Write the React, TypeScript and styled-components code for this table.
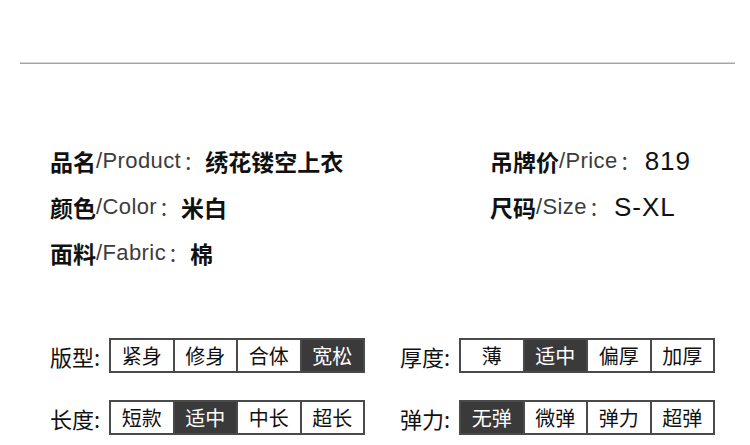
import React from "react";
import styled, { createGlobalStyle } from "styled-components";

const GlobalStyle = createGlobalStyle`
  body {
    margin: 0;
    background: #ffffff;
    font-family: "Noto Sans CJK SC", "Liberation Sans", sans-serif;
    color: #111;
  }
`;

//#region Styled components

const Page = styled("div")`
  width: 750px;
  height: 445px;
  padding-top: 62px;
  box-sizing: border-box;
  overflow: hidden;
`;

const Divider = styled("hr")`
  margin: 0 15px 0 20px;
  height: 2px;
  border: none;
  background: linear-gradient(#d4d4d4 0 50%, #a6a6a6 50% 100%);
`;

const InfoGrid = styled("div")`
  display: grid;
  grid-template-columns: 440px 1fr;
  grid-auto-rows: 46px;
  padding-left: 50px;
  margin-top: 74px;
`;

const InfoRow = styled("div")`
  display: flex;
  align-items: center;
  white-space: nowrap;
`;

const KeyCn = styled("span")`
  font-size: 23px;
  font-weight: 700;
  color: #111;
`;

const KeyEn = styled("span")`
  font-family: "Liberation Sans", sans-serif;
  font-size: 22px;
  font-weight: 400;
  color: #3c3c3c;
  letter-spacing: 0.4px;
`;

const Colon = styled("span")`
  font-size: 20px;
  color: #444;
  width: 24px;
  text-align: center;
`;

const Value = styled("span")<{ $latin?: boolean }>`
  font-family: ${(p) =>
    p.$latin ? '"Liberation Sans", sans-serif' : '"Noto Sans CJK SC", sans-serif'};
  font-size: ${(p) => (p.$latin ? "26px" : "23px")};
  font-weight: ${(p) => (p.$latin ? 400 : 700)};
  margin-left: ${(p) => (p.$latin ? "3px" : "0")};
  letter-spacing: ${(p) => (p.$latin ? "1px" : "0")};
  color: #111;
`;

const AttrGrid = styled("div")`
  display: grid;
  grid-template-columns: 350px 1fr;
  row-gap: 27px;
  padding-left: 50px;
  margin-top: 62px;
`;

const AttrRow = styled("div")`
  display: flex;
  align-items: center;
`;

const AttrLabel = styled("span")`
  width: 59px;
  font-size: 22px;
  color: #111;
  white-space: nowrap;
`;

const Options = styled("div")`
  display: flex;
  width: 256px;
  height: 35px;
  box-sizing: border-box;
  border: 2px solid #4a4a4a;
`;

const Option = styled("div")<{ $active?: boolean }>`
  flex: 1;
  display: flex;
  align-items: center;
  justify-content: center;
  font-size: 20px;
  background: ${(p) => (p.$active ? "#3a3a3a" : "#fff")};
  color: ${(p) => (p.$active ? "#fff" : "#111")};
  & + & {
    border-left: 2px solid #4a4a4a;
  }
`;
//#endregion

const info = [
  { cn: "品名", en: "/Product", value: "绣花镂空上衣" },
  { cn: "吊牌价", en: "/Price", value: "819", latin: true },
  { cn: "颜色", en: "/Color", value: "米白" },
  { cn: "尺码", en: "/Size", value: "S-XL", latin: true },
  { cn: "面料", en: "/Fabric", value: "棉" },
];

const attrs = [
  { label: "版型:", options: ["紧身", "修身", "合体", "宽松"], active: 3 },
  { label: "厚度:", options: ["薄", "适中", "偏厚", "加厚"], active: 1 },
  { label: "长度:", options: ["短款", "适中", "中长", "超长"], active: 1 },
  { label: "弹力:", options: ["无弹", "微弹", "弹力", "超弹"], active: 0 },
];

const App: React.FC = () => {
  return (
    <Page>
      <GlobalStyle />
      <Divider />
      <InfoGrid>
        {info.map((item) => (
          <InfoRow key={item.cn}>
            <KeyCn>{item.cn}</KeyCn>
            <KeyEn>{item.en}</KeyEn>
            <Colon>：</Colon>
            <Value $latin={item.latin}>{item.value}</Value>
          </InfoRow>
        ))}
      </InfoGrid>
      <AttrGrid>
        {attrs.map((attr) => (
          <AttrRow key={attr.label}>
            <AttrLabel>{attr.label}</AttrLabel>
            <Options>
              {attr.options.map((opt, i) => (
                <Option key={opt} $active={i === attr.active}>
                  {opt}
                </Option>
              ))}
            </Options>
          </AttrRow>
        ))}
      </AttrGrid>
    </Page>
  );
};

export default App;
